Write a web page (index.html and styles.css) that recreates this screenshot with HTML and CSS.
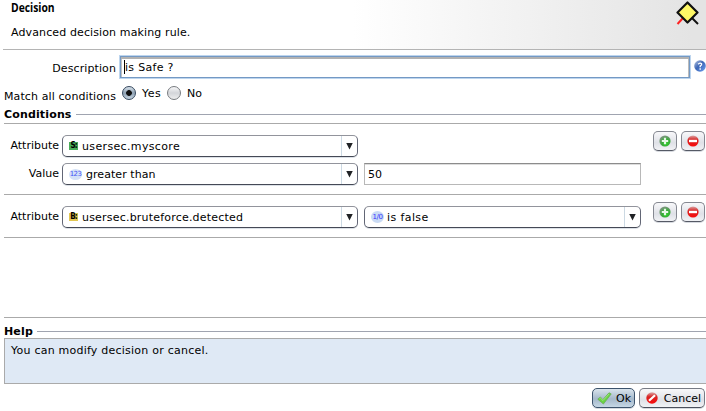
FILE: index.html
```html
<!DOCTYPE html>
<html lang="en">
<head>
<meta charset="utf-8">
<title>Decision</title>
<link rel="stylesheet" href="styles.css">
</head>
<body>
<svg class="defs" width="0" height="0" aria-hidden="true">
  <defs>
    <radialGradient id="green" cx=".6" cy=".7" r=".65"><stop offset="0" stop-color="#31cf2b"/><stop offset=".55" stop-color="#36aa37"/><stop offset="1" stop-color="#79967b"/></radialGradient>
    <linearGradient id="red" x1="0" y1="0" x2="0" y2="1"><stop offset="0" stop-color="#d9a8a8"/><stop offset=".4" stop-color="#d92222"/><stop offset="1" stop-color="#fa0a0a"/></linearGradient>
    <linearGradient id="blue" x1="0" y1="0" x2="1" y2="1"><stop offset="0" stop-color="#bcc9e2"/><stop offset=".45" stop-color="#3c66b5"/><stop offset="1" stop-color="#6fa0f4"/></linearGradient>
    <symbol id="plus" viewBox="0 0 12 12"><circle cx="6" cy="6" r="5.6" fill="url(#green)"/><path d="M6 2.8v6.4M2.8 6h6.4" stroke="#e8f7e8" stroke-width="2.2"/></symbol>
    <symbol id="minus" viewBox="0 0 12 12"><circle cx="6" cy="6" r="5.6" fill="url(#red)"/><path d="M2 6h8" stroke="#fff" stroke-width="2.4"/></symbol>
  </defs>
</svg>
<main class="dialog">
  <header class="header">
    <div>
      <h1 class="title">Decision</h1>
      <p class="subtitle">Advanced decision making rule.</p>
    </div>
    <svg class="decision-icon" width="24" height="26" viewBox="0 0 24 26"><path d="M7 17l-5.500 6" stroke="#f22" stroke-width="2"/><path d="M16 17l6 6" stroke="#111" stroke-width="2"/><path d="M11.500 1.500L21.500 11.500L11.500 21.500L1.500 11.500Z" fill="#fff866" stroke="#111" stroke-width="2.2" stroke-linejoin="round"/></svg>
  </header>
  <section class="row description">
    <label class="label wide">Description</label>
    <div class="focus-field"><i class="caret"></i><span class="t-desc">is Safe ?</span></div>
    <svg class="help-icon" width="12" height="12" viewBox="0 0 12 12"><circle cx="6" cy="6" r="5.8" fill="url(#blue)"/><path d="M4.2 4.2Q6 2.2 7.6 3.8Q8 5 6.2 6V7.2M6.2 8.3v1.4" fill="none" stroke="#fff" stroke-width="1.4"/></svg>
  </section>
  <section class="row match">
    <label class="label wide match-label">Match all conditions</label>
    <span class="radio checked"></span><span class="yes">Yes</span>
    <span class="radio"></span><span class="no">No</span>
  </section>
  <h2 class="heading conditions-title"><span>Conditions</span></h2>
  <section class="conditions">
    <div class="condition first">
      <label class="label">Attribute</label>
      <div class="combo"><span class="type string">S:</span><span class="combo-text score">usersec.myscore</span><span class="arrow"></span></div>
      <div class="actions"><button class="tool"><svg width="12" height="12"><use href="#plus"/></svg></button><button class="tool"><svg width="12" height="12"><use href="#minus"/></svg></button></div>
    </div>
    <div class="condition second">
      <label class="label">Value</label>
      <div class="combo"><span class="type number">123</span><span class="combo-text greater">greater than</span><span class="arrow"></span></div>
      <div class="field">50</div>
    </div>
    <div class="condition third">
      <label class="label">Attribute</label>
      <div class="combo"><span class="type boolean">B:</span><span class="combo-text">usersec.bruteforce.detected</span><span class="arrow"></span></div>
      <div class="combo small"><span class="type bit">1/0</span><span class="combo-text false">is false</span><span class="arrow"></span></div>
      <div class="actions"><button class="tool"><svg width="12" height="12"><use href="#plus"/></svg></button><button class="tool"><svg width="12" height="12"><use href="#minus"/></svg></button></div>
    </div>
  </section>
  <h2 class="heading help-title"><span>Help</span></h2>
  <section class="help"><span>You can modify decision or cancel.</span></section>
  <footer class="footer">
    <button class="button ok"><svg width="15" height="13" viewBox="0 0 15 13"><path d="M.8 7.2L3.4 5l2.400 2.800L12 .8l2.200 1.100L6.400 12Z" fill="#69d345" stroke="#6cae56" stroke-width=".8"/><path d="M2.500 6.700l.9-.6L6 8.500l6-6.500" fill="none" stroke="#a5ea88" stroke-width=".8"/></svg><span>Ok</span></button>
    <button class="button cancel"><svg width="12" height="12" viewBox="0 0 12 12"><circle cx="6" cy="6" r="5.7" fill="url(#red)"/><path d="M3 8.8l6-5.6" stroke="#fff" stroke-width="2.2"/></svg><span>Cancel</span></button>
  </footer>
</main>
</body>
</html>
```
FILE: styles.css
```css
* { box-sizing: border-box; }
body { margin: 0; background: #fff; color: #000; font: 11px/14px "DejaVu Sans", sans-serif; overflow: hidden; }
h1, h2, p { margin: 0; }
button { padding: 0; font: inherit; color: inherit; }
.defs { position: absolute; }
.dialog { width: 706px; height: 411px; }
.header { height: 50px; display: flex; justify-content: space-between; padding: 1px 6px 0 11px; background: linear-gradient(90deg, #fff 50%, #e4e4e4 98%); border-bottom: 1px solid #b4b4b4; border-image: linear-gradient(90deg, #fff 4px, #b4b4b4 4px) 1; }
.title { font: bold 12px/14px "Open Sans", sans-serif; transform: scaleX(.86); transform-origin: left; }
.subtitle { margin-top: 11px; letter-spacing: .12px; white-space: nowrap; }
.row { display: flex; }
.label { width: 62px; padding-right: 3px; text-align: right; white-space: nowrap; flex: none; }
.label.wide { width: 119px; letter-spacing: .1px; }
.description { height: 29px; padding-top: 5px; }
.description .label { padding-top: 7px; }
.focus-field { width: 572px; height: 24px; display: flex; padding: 3px 0 0 4px; border: 1px solid #bdd5ee; box-shadow: inset 0 0 0 1px #7499c4, inset 0 2px 0 1px #b2b2b2, inset 1px 0 0 1px #c0c0c0, inset -1px 0 0 1px #bbb; }
.caret { width: 1px; height: 14px; margin-top: 1px; background: #000; }
.t-desc { padding-top: 2px; letter-spacing: .3px; }
.help-icon { margin: 5px 0 0 3px; }
.match { height: 28px; padding-top: 7px; }
.match-label { padding-top: 4px; }
.radio { width: 14px; height: 14px; margin: 0 0 0 3px; border: 1px solid #777b80; border-radius: 50%; background: linear-gradient(#f7f7f8, #d3d5d9 50%, #eee); }
.radio.checked { border-color: #34475d; background: radial-gradient(circle at 50% 50%, #111 0 2.5px, transparent 3.2px), linear-gradient(#d9e3ec, #8da0b2 50%, #c6d5e2); }
.yes { width: 20px; margin-left: 6px; padding-top: 1px; letter-spacing: .5px; }
.match .radio:nth-of-type(3) { margin-left: 5px; }
.no { margin-left: 6px; padding-top: 1px; }
.heading { display: flex; align-items: center; gap: 4px; height: 14px; padding-left: 4px; font-size: 11px; line-height: 14px; letter-spacing: .15px; }
.heading span { padding-top: 1px; }
.heading::after { content: ""; flex: 1; height: 1px; background: #a0a4b0; }
.conditions { height: 195px; margin: 2px 0 0 4px; border-top: 1px solid #aaa; border-bottom: 1px solid #aaa; }
.condition { display: flex; align-items: flex-start; }
.condition .label { width: 58px; padding-top: 4px; }
.first { height: 39px; padding-top: 11px; }
.second { height: 32px; border-bottom: 1px solid #aaa; }
.third { height: 43px; padding-top: 11px; border-bottom: 1px solid #aaa; }
.combo { width: 296px; height: 22px; display: flex; align-items: center; padding-left: 6px; border: 1px solid #626675; border-top-color: #92949c; border-bottom-color: #454956; border-radius: 5px; box-shadow: 0 1px 0 #dce1e7; }
.combo-text { margin-left: 4px; padding-top: 2px; letter-spacing: .2px; white-space: nowrap; }
.score { letter-spacing: .35px; }
.greater { letter-spacing: .05px; }
.false { margin-left: 3px; letter-spacing: .4px; }
.arrow { width: 16px; height: 20px; display: grid; place-items: center; margin-left: auto; border-left: 1px solid #ccd9e3; }
.arrow::after { content: ""; width: 7px; height: 7px; clip-path: polygon(0 0, 100% 0, 50% 100%); background: #202225; }
.small { width: 277px; margin-left: 6px; }
.type { height: 8px; font-size: 8px; line-height: 8px; text-align: center; letter-spacing: -.5px; }
.string, .boolean { width: 9px; font-size: 8px; font-weight: bold; letter-spacing: -1px; background: #4aac59; }
.string, .boolean { font-family: "DejaVu Sans Condensed", "DejaVu Sans", sans-serif; }
.boolean { background: #e1c653; }
.number { width: 13px; height: 11px; line-height: 11px; font-size: 7px; letter-spacing: -.6px; border-radius: 50%; color: #4556f5; background: #d3e1f7; }
.bit { width: 13px; height: 12px; line-height: 12px; font-size: 7px; border-radius: 50%; color: #3535ff; background: #c9daf4; }
.field { width: 277px; height: 22px; margin-left: 6px; padding: 4px 3px; border: 1px solid #b8b8b8; border-top-color: #8c8c8c; box-shadow: inset 0 1px 0 #ddd; }
.actions { display: flex; gap: 4px; margin: -4px 0 0 auto; padding-right: 1px; }
.tool { width: 24px; height: 20px; display: grid; place-items: center; border: 1px solid #858891; border-bottom-color: #555965; border-radius: 5px; background: linear-gradient(#f8f8fa, #dfe1e7 60%, #f1f2f5); box-shadow: 0 1px 0 #d6d9df; }
.help-title { margin-top: 6px; }
.help { height: 46px; margin-left: 4px; padding: 5px 6px; border: 1px solid #aaa; border-right: 0; background: #dfe9f5; letter-spacing: .23px; }
.footer { display: flex; justify-content: flex-end; gap: 4px; padding: 4px 1px 0 0; }
.button { width: 66px; height: 20px; display: flex; align-items: center; justify-content: space-between; padding: 0 3px 0 6px; border: 1px solid #777b85; border-bottom-color: #4b505c; border-radius: 5px; background: linear-gradient(#f8f8fa, #dfe1e7 60%, #f1f2f5); box-shadow: 0 1px 0 #d6d9df; }
.button span { padding-top: 1px; }
.ok { width: 43px; padding-left: 4px; border-color: #3c536c; background: linear-gradient(#d9e4ed, #a5b8ca 55%, #c6d7e5); }
```
